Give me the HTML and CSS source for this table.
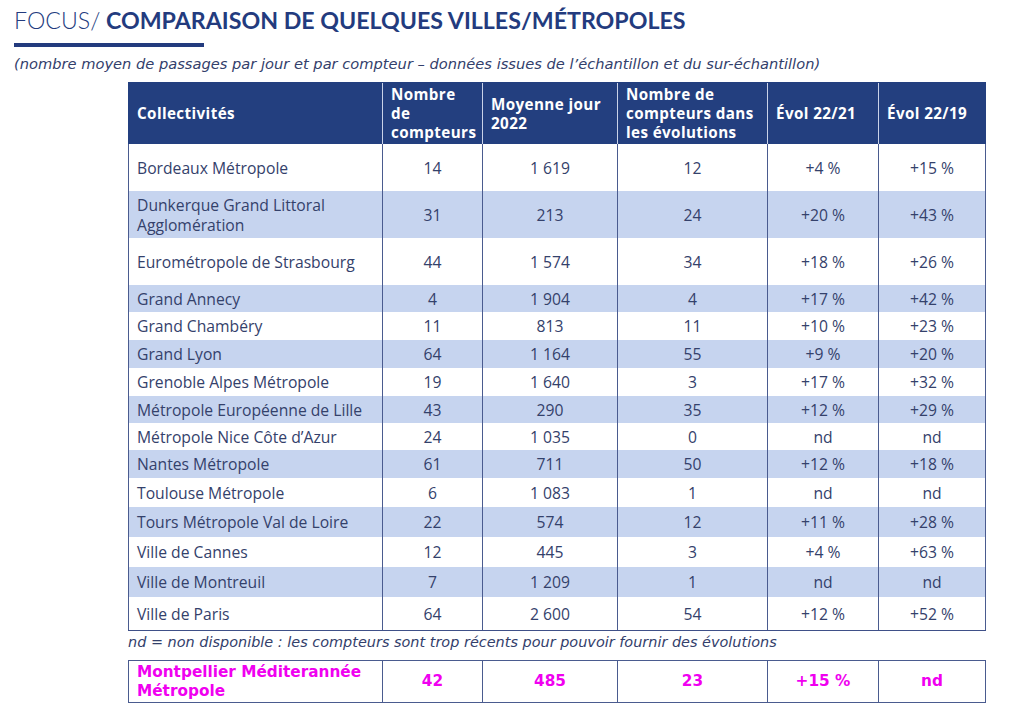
FILE: index.html
```html
<!DOCTYPE html>
<html lang="fr">
<head>
<meta charset="utf-8">
<title>Focus</title>
<link rel="stylesheet" href="styles.css">
</head>
<body>
<div class="page">
  <h1 class="title"><span class="light">FOCUS/</span> <span class="bold">COMPARAISON DE QUELQUES VILLES/MÉTROPOLES</span></h1>
  <div class="rule"></div>
  <p class="subtitle">(nombre moyen de passages par jour et par compteur – données issues de l’échantillon et du sur-échantillon)</p>

  <div class="tables">
    <table class="data">
      <colgroup>
        <col class="c1"><col class="c2"><col class="c3"><col class="c4"><col class="c5"><col class="c6">
      </colgroup>
      <thead>
        <tr>
          <th>Collectivités</th>
          <th>Nombre<br>de<br>compteurs</th>
          <th>Moyenne jour<br>2022</th>
          <th>Nombre de<br>compteurs dans<br>les évolutions</th>
          <th>Évol 22/21</th>
          <th>Évol 22/19</th>
        </tr>
      </thead>
      <tbody>
        <tr class="tall"><td class="name">Bordeaux Métropole</td><td>14</td><td>1 619</td><td>12</td><td>+4 %</td><td>+15 %</td></tr>
        <tr class="tall band"><td class="name">Dunkerque Grand Littoral<br>Agglomération</td><td>31</td><td>213</td><td>24</td><td>+20 %</td><td>+43 %</td></tr>
        <tr class="tall"><td class="name">Eurométropole de Strasbourg</td><td>44</td><td>1 574</td><td>34</td><td>+18 %</td><td>+26 %</td></tr>
        <tr class="h27 band"><td class="name">Grand Annecy</td><td>4</td><td>1 904</td><td>4</td><td>+17 %</td><td>+42 %</td></tr>
        <tr class="h28"><td class="name">Grand Chambéry</td><td>11</td><td>813</td><td>11</td><td>+10 %</td><td>+23 %</td></tr>
        <tr class="h28 band"><td class="name">Grand Lyon</td><td>64</td><td>1 164</td><td>55</td><td>+9 %</td><td>+20 %</td></tr>
        <tr class="h28"><td class="name">Grenoble Alpes Métropole</td><td>19</td><td>1 640</td><td>3</td><td>+17 %</td><td>+32 %</td></tr>
        <tr class="h27 band"><td class="name">Métropole Européenne de Lille</td><td>43</td><td>290</td><td>35</td><td>+12 %</td><td>+29 %</td></tr>
        <tr class="h27"><td class="name">Métropole Nice Côte d’Azur</td><td>24</td><td>1 035</td><td>0</td><td>nd</td><td>nd</td></tr>
        <tr class="h28 band"><td class="name">Nantes Métropole</td><td>61</td><td>711</td><td>50</td><td>+12 %</td><td>+18 %</td></tr>
        <tr class="h29"><td class="name">Toulouse Métropole</td><td>6</td><td>1 083</td><td>1</td><td>nd</td><td>nd</td></tr>
        <tr class="h30 band"><td class="name">Tours Métropole Val de Loire</td><td>22</td><td>574</td><td>12</td><td>+11 %</td><td>+28 %</td></tr>
        <tr class="h30"><td class="name">Ville de Cannes</td><td>12</td><td>445</td><td>3</td><td>+4 %</td><td>+63 %</td></tr>
        <tr class="h30 band"><td class="name">Ville de Montreuil</td><td>7</td><td>1 209</td><td>1</td><td>nd</td><td>nd</td></tr>
        <tr class="h32"><td class="name">Ville de Paris</td><td>64</td><td>2 600</td><td>54</td><td>+12 %</td><td>+52 %</td></tr>
      </tbody>
    </table>
    <p class="note">nd = non disponible : les compteurs sont trop récents pour pouvoir fournir des évolutions</p>
    <table class="focus">
      <colgroup>
        <col class="c1"><col class="c2"><col class="c3"><col class="c4"><col class="c5"><col class="c6">
      </colgroup>
      <tbody>
        <tr><td class="name">Montpellier Méditerannée<br>Métropole</td><td>42</td><td>485</td><td>23</td><td>+15 %</td><td>nd</td></tr>
      </tbody>
    </table>
  </div>
</div>
</body>
</html>
```

FILE: styles.css
```css
html, body {
  margin: 0;
  padding: 0;
  background: #ffffff;
}

.page {
  padding: 5px 0 0 14px;
  font-family: "Open Sans", "Noto Sans", sans-serif;
  color: #2f3c69;
}

.title {
  margin: 0;
  font-family: "Lato", "Open Sans", sans-serif;
  font-size: 23.2px;
  line-height: 30px;
  color: #233b7e;
  white-space: nowrap;
}

.title .light {
  font-weight: 300;
}

.title .bold {
  font-weight: 700;
}

.rule {
  width: 190px;
  height: 4px;
  margin-top: 8px;
  background: #233b7e;
}

.subtitle {
  margin: 8px 0 0 0;
  font-family: "DejaVu Sans", sans-serif;
  font-style: italic;
  font-size: 14.65px;
  line-height: 18px;
  color: #33406b;
  white-space: nowrap;
}

.tables {
  margin: 9px 0 0 114px;
  width: 857px;
}

table {
  border-collapse: collapse;
  table-layout: fixed;
  width: 857px;
}

col.c1 { width: 254px; }
col.c2 { width: 100px; }
col.c3 { width: 135px; }
col.c4 { width: 150px; }
col.c5 { width: 111px; }
col.c6 { width: 107px; }

.data thead th {
  background: #233f7f;
  color: #ffffff;
  font-family: "Open Sans", sans-serif;
  font-weight: 700;
  font-size: 15.2px;
  line-height: 19px;
  letter-spacing: 0.4px;
  text-align: left;
  white-space: nowrap;
  padding: 1px 2px 1px 8px;
  height: 59px;
  border-left: 1px solid #c9d2e8;
  border-top: 1px solid #233f7f;
  vertical-align: middle;
}

.data thead th:first-child {
  border-left: 1px solid #233f7f;
}

.data tbody td {
  font-size: 15.7px;
  line-height: 20px;
  color: #34416b;
  text-align: center;
  padding: 0 8px;
  border-left: 1.5px solid #4a5b8f;
  border-right: 1.5px solid #4a5b8f;
  vertical-align: middle;
}

.data tbody td.name {
  text-align: left;
}

.data tbody tr:last-child td {
  border-bottom: 1.5px solid #3f5088;
}

.data tbody tr.band td {
  background: #c6d4ef;
}

.data tbody tr.tall td { height: 47px; }
.data tbody tr.h27 td { height: 27px; }
.data tbody tr.h28 td { height: 28px; }
.data tbody tr.h29 td { height: 29px; }
.data tbody tr.h30 td { height: 30px; }
.data tbody tr.h32 td { height: 33px; }

.note {
  margin: 0;
  padding: 1px 0 0 0;
  height: 28px;
  font-family: "DejaVu Sans", sans-serif;
  font-style: italic;
  font-size: 14.45px;
  line-height: 20px;
  color: #33406b;
  white-space: nowrap;
}

.focus td {
  height: 41px;
  border: 1.5px solid #4a5b8f;
  font-family: "DejaVu Sans", sans-serif;
  font-weight: 700;
  font-size: 15.3px;
  line-height: 19px;
  color: #f000f0;
  text-align: center;
  padding: 0 8px;
  vertical-align: middle;
}

.focus td.name {
  text-align: left;
}
```
